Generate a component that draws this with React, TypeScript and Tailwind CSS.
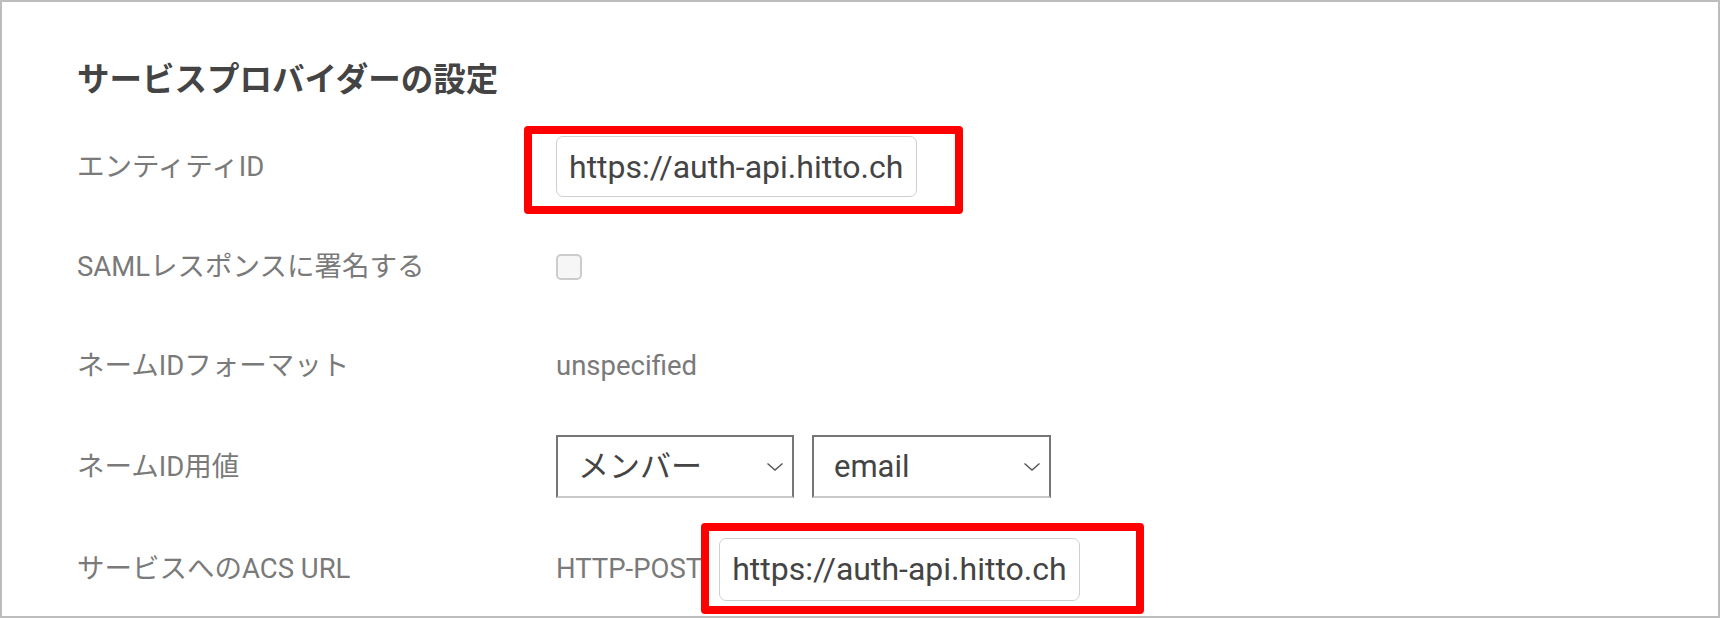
import React from "react";

const font = { fontFamily: '"Roboto", "Noto Sans CJK JP", sans-serif' };

function Chevron() {
  return (
    <svg width="18" height="10" viewBox="0 0 18 10" className="shrink-0">
      <path d="M1.5 1.5 L9 8 L16.5 1.5" fill="none" stroke="#555" strokeWidth="1.4" />
    </svg>
  );
}

function Select({ label, w }: { label: string; w: string }) {
  return (
    <div
      className={`${w} h-[63px] flex items-center justify-between border-2 border-[#767676] border-b-[#c9c9c9] pl-[20px] pr-[8px] text-[31px] text-[#444] bg-white`}
    >
      <span className="leading-none">{label}</span>
      <Chevron />
    </div>
  );
}

function UrlBox({ h, children }: { h: string; children?: React.ReactNode }) {
  return (
    <div className="relative">
      <div
        className={`w-[361px] ${h} flex items-center border-[1.5px] border-[#cfcfcf] rounded-[7px] pl-[12px] text-[32px] text-[#444] overflow-hidden whitespace-nowrap bg-white`}
      >
        https://auth-api.hitto.ch
      </div>
      {children}
    </div>
  );
}

export default function App() {
  return (
    <div
      className="w-[1720px] h-[618px] border-2 border-[#bdbdbd] bg-white overflow-hidden pl-[75px]"
      style={font}
    >
      <div className="h-[114px] pt-[56px]">
        <h1 className="text-[32.5px] leading-[44px] font-bold text-[#444]">
          サービスプロバイダーの設定
        </h1>
      </div>

      <div className="grid grid-cols-[479px_1fr] text-[27.5px] text-[#7a7a7a]">
        {/* row 1 */}
        <div className="h-[101px] flex items-center">エンティティID</div>
        <div className="h-[101px] flex items-center">
          <UrlBox h="h-[61px]">
            <div className="absolute left-[-32px] top-[-10px] right-[-46px] bottom-[-17px] border-[8px] border-[#ff0000] rounded-[4px]" />
          </UrlBox>
        </div>

        {/* row 2 */}
        <div className="h-[100px] flex items-center">SAMLレスポンスに署名する</div>
        <div className="h-[100px] flex items-center">
          <div className="w-[26px] h-[26px] rounded-[5px] border-2 border-[#cccccc] bg-[#f6f6f6]" />
        </div>

        {/* row 3 */}
        <div className="h-[97px] flex items-center">ネームIDフォーマット</div>
        <div className="h-[97px] flex items-center">unspecified</div>

        {/* row 4 */}
        <div className="h-[105px] flex items-center">ネームID用値</div>
        <div className="h-[105px] flex items-center gap-[18px]">
          <Select label="メンバー" w="w-[238px]" />
          <Select label="email" w="w-[239px]" />
        </div>

        {/* row 5 */}
        <div className="h-[100px] flex items-center">サービスへのACS URL</div>
        <div className="h-[100px] flex items-center">
          <span>HTTP-POST</span>
          <div className="ml-[17px]">
            <UrlBox h="h-[63px]">
              <div className="absolute left-[-18px] top-[-15px] right-[-64px] bottom-[-13px] border-[8px] border-[#ff0000] rounded-[4px]" />
            </UrlBox>
          </div>
        </div>
      </div>
    </div>
  );
}
